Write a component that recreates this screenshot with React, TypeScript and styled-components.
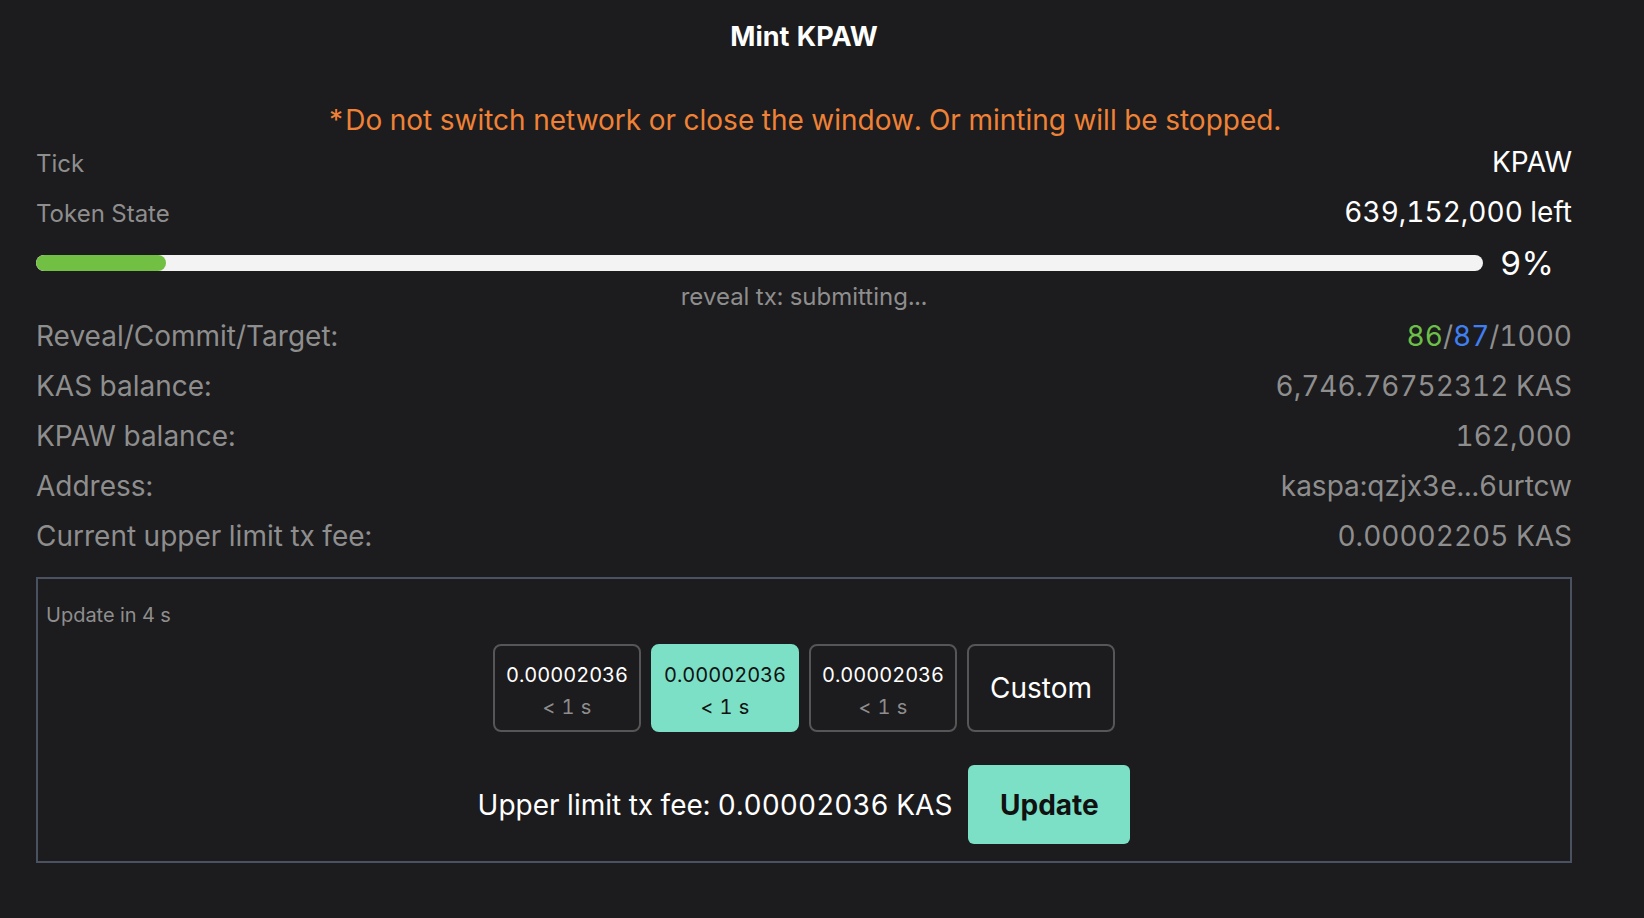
import React from "react";
import styled, { createGlobalStyle } from "styled-components";

const GlobalStyle = createGlobalStyle`
  html, body {
    margin: 0;
    padding: 0;
    background: #1c1b1d;
  }
  body {
    font-family: Inter, "Noto Sans", sans-serif;
    font-variant-numeric: tabular-nums;
    color: #ffffff;
  }
`;

const stats = [
  { label: "KAS balance:", value: "6,746.76752312 KAS" },
  { label: "KPAW balance:", value: "162,000" },
  { label: "Address:", value: "kaspa:qzjx3e...6urtcw" },
  { label: "Current upper limit tx fee:", value: "0.00002205 KAS" },
];

const feeOptions = [
  { fee: "0.00002036", time: "< 1 s", active: false },
  { fee: "0.00002036", time: "< 1 s", active: true },
  { fee: "0.00002036", time: "< 1 s", active: false },
];

const progress = 9;

const MintPanel: React.FC = () => {
  return (
    <Page>
      <GlobalStyle />
      <Panel>
        <Title>Mint KPAW</Title>
        <Warning>
          *Do not switch network or close the window. Or minting will be stopped.
        </Warning>

        <InfoRow>
          <InfoLabel>Tick</InfoLabel>
          <InfoValue>KPAW</InfoValue>
        </InfoRow>
        <InfoRow>
          <InfoLabel>Token State</InfoLabel>
          <InfoValue>639,152,000 left</InfoValue>
        </InfoRow>

        <ProgressRow>
          <Track>
            <Fill style={{ width: `${progress}%` }} />
          </Track>
          <Percent>{progress}%</Percent>
        </ProgressRow>
        <Status>reveal tx: submitting...</Status>

        <StatList>
          <StatRow>
            <span>Reveal/Commit/Target:</span>
            <span>
              <Count color="#6cbf47">86</Count>/<Count color="#3f7ff0">87</Count>/1000
            </span>
          </StatRow>
          {stats.map((s) => (
            <StatRow key={s.label}>
              <span>{s.label}</span>
              <span>{s.value}</span>
            </StatRow>
          ))}
        </StatList>

        <FeeBox>
          <Countdown>Update in 4 s</Countdown>
          <FeeOptions>
            {feeOptions.map((o, i) => (
              <FeeButton key={i} $active={o.active}>
                <FeeAmount>{o.fee}</FeeAmount>
                <FeeTime $active={o.active}>{o.time}</FeeTime>
              </FeeButton>
            ))}
            <FeeButton $active={false}>
              <CustomLabel>Custom</CustomLabel>
            </FeeButton>
          </FeeOptions>
          <UpdateRow>
            <FeeText>Upper limit tx fee: 0.00002036 KAS</FeeText>
            <UpdateButton>Update</UpdateButton>
          </UpdateRow>
        </FeeBox>
      </Panel>
    </Page>
  );
};

export default MintPanel;

const Page = styled.div`
  min-height: 100vh;
  padding: 19px 72px 0 36px;
  box-sizing: border-box;
`;

const Panel = styled.div`
  display: flex;
  flex-direction: column;
`;

const Title = styled.h1`
  margin: 0;
  font-size: 27px;
  line-height: 36px;
  font-weight: 700;
  text-align: center;
  color: #ffffff;
`;

const Warning = styled.div`
  margin-top: 47px;
  font-size: 28px;
  line-height: 36px;
  text-align: center;
  color: #ef8236;
`;

const InfoRow = styled.div`
  display: flex;
  justify-content: space-between;
  align-items: baseline;
  line-height: 49px;
`;

const InfoLabel = styled.span`
  font-size: 24px;
  color: #8e8e8e;
`;

const InfoValue = styled.span`
  font-size: 28px;
  color: #ffffff;
`;

const ProgressRow = styled.div`
  display: flex;
  align-items: center;
  height: 44px;
  margin-top: 3px;
`;

const Track = styled.div`
  flex: 1;
  height: 16px;
  border-radius: 8px;
  background: #f3f3f3;
  overflow: hidden;
`;

const Fill = styled.div`
  height: 100%;
  border-radius: 8px;
  background: #71c043;
`;

const Percent = styled.span`
  width: 72px;
  padding-left: 17px;
  font-size: 33px;
  line-height: 44px;
  color: #ffffff;
`;

const Status = styled.div`
  margin-top: 2px;
  font-size: 24px;
  line-height: 20px;
  text-align: center;
  color: #8e8e8e;
`;

const StatList = styled.div`
  margin-top: 4px;
  display: flex;
  flex-direction: column;
`;

const StatRow = styled.div`
  display: flex;
  justify-content: space-between;
  font-size: 28px;
  line-height: 50px;
  color: #8e8e8e;
`;

const Count = styled.span<{ color: string }>`
  color: ${(p) => p.color};
`;

const FeeBox = styled.div`
  margin-top: 16px;
  border: 2px solid #4a5160;
  padding: 22px 8px 17px;
  display: flex;
  flex-direction: column;
`;

const Countdown = styled.div`
  font-size: 20px;
  line-height: 28px;
  color: #8e8e8e;
`;

const FeeOptions = styled.div`
  display: flex;
  justify-content: center;
  gap: 10px;
  margin-top: 15px;
`;

const FeeButton = styled.div<{ $active: boolean }>`
  width: 148px;
  height: 88px;
  box-sizing: border-box;
  border: 2px solid ${(p) => (p.$active ? "#7be0c6" : "#565656")};
  border-radius: 8px;
  background: ${(p) => (p.$active ? "#7be0c6" : "transparent")};
  color: ${(p) => (p.$active ? "#111111" : "#ffffff")};
  display: flex;
  flex-direction: column;
  align-items: center;
  justify-content: center;
  padding-top: 6px;
`;

const FeeAmount = styled.span`
  font-size: 20px;
  line-height: 32px;
`;

const FeeTime = styled.span<{ $active: boolean }>`
  font-size: 20px;
  line-height: 32px;
  letter-spacing: 0.5px;
  color: ${(p) => (p.$active ? "#111111" : "#8e8e8e")};
`;

const CustomLabel = styled.span`
  font-size: 28px;
  margin-top: -6px;
`;

const UpdateRow = styled.div`
  display: flex;
  justify-content: center;
  align-items: center;
  gap: 16px;
  margin-top: 33px;
`;

const FeeText = styled.span`
  font-size: 28px;
  color: #ffffff;
`;

const UpdateButton = styled.button`
  width: 162px;
  height: 79px;
  border: none;
  border-radius: 6px;
  background: #7be0c6;
  color: #111111;
  font-family: Inter, "Noto Sans", sans-serif;
  font-size: 28px;
  font-weight: 700;
`;
